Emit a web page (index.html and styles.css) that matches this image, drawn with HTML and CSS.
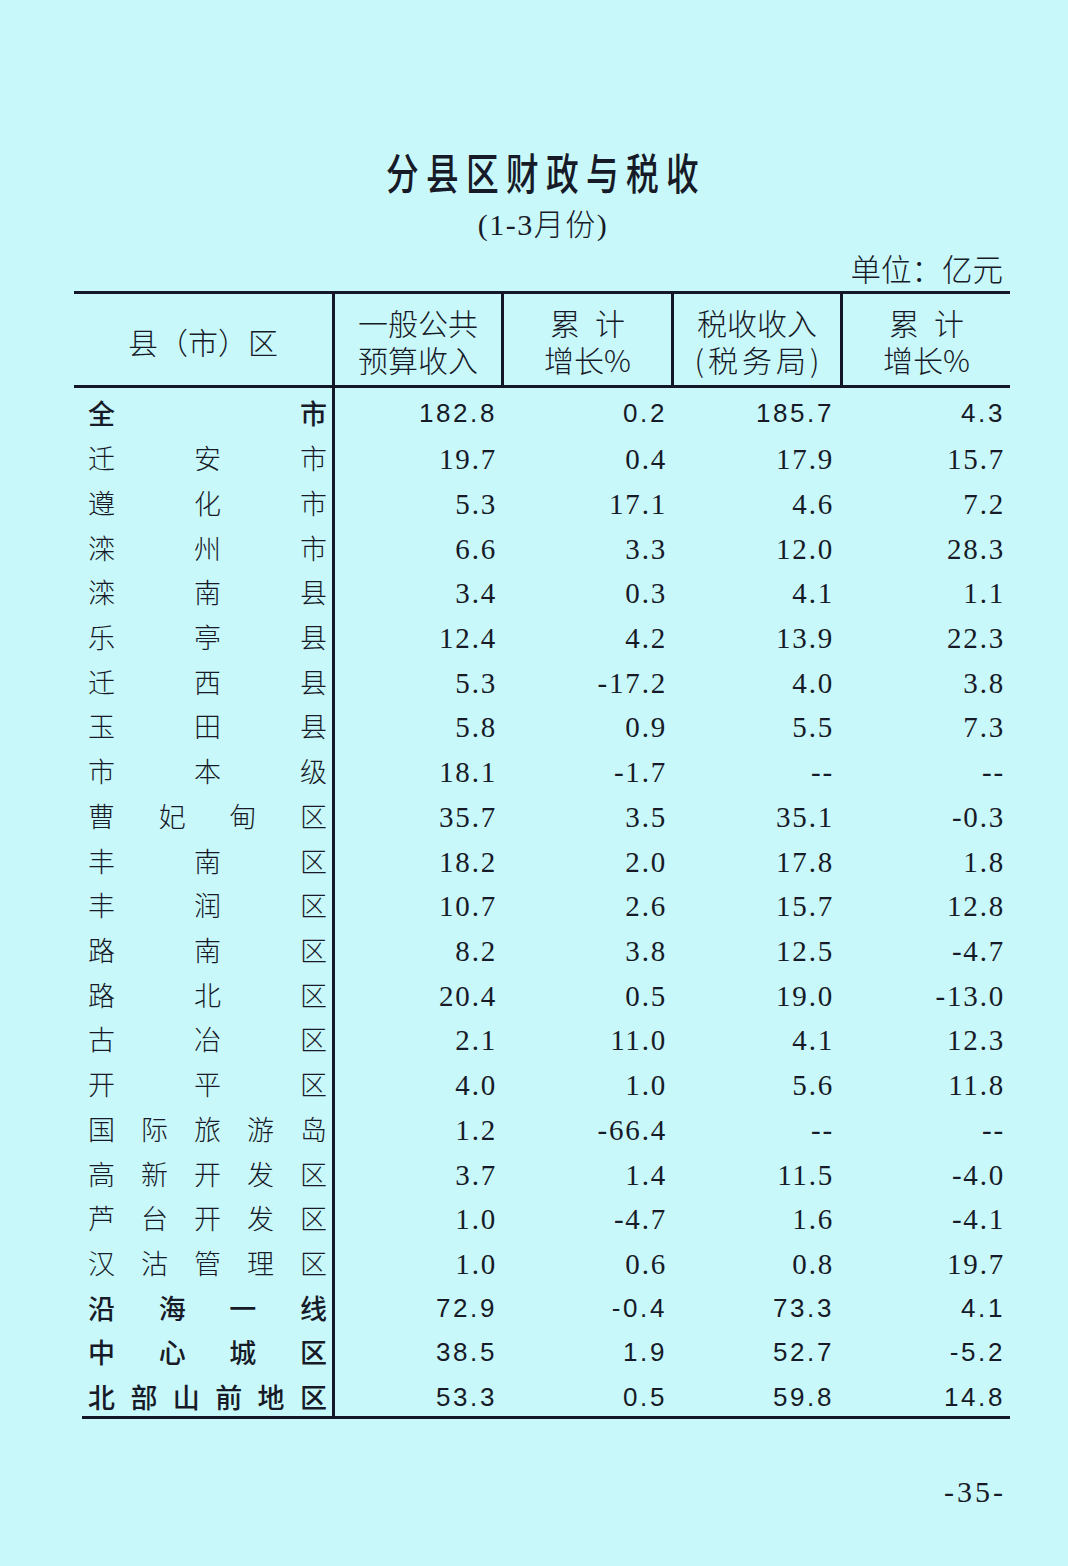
FILE: index.html
```html
<!DOCTYPE html>
<html lang="zh-CN">
<head>
<meta charset="utf-8">
<title>分县区财政与税收</title>
<link rel="stylesheet" href="styles.css">
</head>
<body>
<div class="page">
  <h1 class="title"><span class="title-text">分县区财政与税收</span></h1>
  <div class="subtitle">(1-3月份)</div>
  <div class="sheet">
    <div class="unit">单位：亿元</div>
    <div class="table">
      <div class="head">
        <div class="hc hc-first">县（市）区</div>
        <div class="hc"><span class="hl">一般公共</span><span class="hl">预算收入</span></div>
        <div class="hc"><span class="hl">累&ensp;计</span><span class="hl">增长%</span></div>
        <div class="hc"><span class="hl">税收收入</span><span class="hl narrow">(税务局)</span></div>
        <div class="hc"><span class="hl">累&ensp;计</span><span class="hl">增长%</span></div>
      </div>
      <div class="body">
        <div class="row bold"><div class="name"><span>全</span><span>市</span></div><div class="num n1">182.8</div><div class="num n2">0.2</div><div class="num n3">185.7</div><div class="num n4">4.3</div></div>
        <div class="row"><div class="name"><span>迁</span><span>安</span><span>市</span></div><div class="num n1">19.7</div><div class="num n2">0.4</div><div class="num n3">17.9</div><div class="num n4">15.7</div></div>
        <div class="row"><div class="name"><span>遵</span><span>化</span><span>市</span></div><div class="num n1">5.3</div><div class="num n2">17.1</div><div class="num n3">4.6</div><div class="num n4">7.2</div></div>
        <div class="row"><div class="name"><span>滦</span><span>州</span><span>市</span></div><div class="num n1">6.6</div><div class="num n2">3.3</div><div class="num n3">12.0</div><div class="num n4">28.3</div></div>
        <div class="row"><div class="name"><span>滦</span><span>南</span><span>县</span></div><div class="num n1">3.4</div><div class="num n2">0.3</div><div class="num n3">4.1</div><div class="num n4">1.1</div></div>
        <div class="row"><div class="name"><span>乐</span><span>亭</span><span>县</span></div><div class="num n1">12.4</div><div class="num n2">4.2</div><div class="num n3">13.9</div><div class="num n4">22.3</div></div>
        <div class="row"><div class="name"><span>迁</span><span>西</span><span>县</span></div><div class="num n1">5.3</div><div class="num n2">-17.2</div><div class="num n3">4.0</div><div class="num n4">3.8</div></div>
        <div class="row"><div class="name"><span>玉</span><span>田</span><span>县</span></div><div class="num n1">5.8</div><div class="num n2">0.9</div><div class="num n3">5.5</div><div class="num n4">7.3</div></div>
        <div class="row"><div class="name"><span>市</span><span>本</span><span>级</span></div><div class="num n1">18.1</div><div class="num n2">-1.7</div><div class="num n3">--</div><div class="num n4">--</div></div>
        <div class="row"><div class="name"><span>曹</span><span>妃</span><span>甸</span><span>区</span></div><div class="num n1">35.7</div><div class="num n2">3.5</div><div class="num n3">35.1</div><div class="num n4">-0.3</div></div>
        <div class="row"><div class="name"><span>丰</span><span>南</span><span>区</span></div><div class="num n1">18.2</div><div class="num n2">2.0</div><div class="num n3">17.8</div><div class="num n4">1.8</div></div>
        <div class="row"><div class="name"><span>丰</span><span>润</span><span>区</span></div><div class="num n1">10.7</div><div class="num n2">2.6</div><div class="num n3">15.7</div><div class="num n4">12.8</div></div>
        <div class="row"><div class="name"><span>路</span><span>南</span><span>区</span></div><div class="num n1">8.2</div><div class="num n2">3.8</div><div class="num n3">12.5</div><div class="num n4">-4.7</div></div>
        <div class="row"><div class="name"><span>路</span><span>北</span><span>区</span></div><div class="num n1">20.4</div><div class="num n2">0.5</div><div class="num n3">19.0</div><div class="num n4">-13.0</div></div>
        <div class="row"><div class="name"><span>古</span><span>冶</span><span>区</span></div><div class="num n1">2.1</div><div class="num n2">11.0</div><div class="num n3">4.1</div><div class="num n4">12.3</div></div>
        <div class="row"><div class="name"><span>开</span><span>平</span><span>区</span></div><div class="num n1">4.0</div><div class="num n2">1.0</div><div class="num n3">5.6</div><div class="num n4">11.8</div></div>
        <div class="row"><div class="name"><span>国</span><span>际</span><span>旅</span><span>游</span><span>岛</span></div><div class="num n1">1.2</div><div class="num n2">-66.4</div><div class="num n3">--</div><div class="num n4">--</div></div>
        <div class="row"><div class="name"><span>高</span><span>新</span><span>开</span><span>发</span><span>区</span></div><div class="num n1">3.7</div><div class="num n2">1.4</div><div class="num n3">11.5</div><div class="num n4">-4.0</div></div>
        <div class="row"><div class="name"><span>芦</span><span>台</span><span>开</span><span>发</span><span>区</span></div><div class="num n1">1.0</div><div class="num n2">-4.7</div><div class="num n3">1.6</div><div class="num n4">-4.1</div></div>
        <div class="row"><div class="name"><span>汉</span><span>沽</span><span>管</span><span>理</span><span>区</span></div><div class="num n1">1.0</div><div class="num n2">0.6</div><div class="num n3">0.8</div><div class="num n4">19.7</div></div>
        <div class="row bold"><div class="name"><span>沿</span><span>海</span><span>一</span><span>线</span></div><div class="num n1">72.9</div><div class="num n2">-0.4</div><div class="num n3">73.3</div><div class="num n4">4.1</div></div>
        <div class="row bold"><div class="name"><span>中</span><span>心</span><span>城</span><span>区</span></div><div class="num n1">38.5</div><div class="num n2">1.9</div><div class="num n3">52.7</div><div class="num n4">-5.2</div></div>
        <div class="row bold"><div class="name"><span>北</span><span>部</span><span>山</span><span>前</span><span>地</span><span>区</span></div><div class="num n1">53.3</div><div class="num n2">0.5</div><div class="num n3">59.8</div><div class="num n4">14.8</div></div>
      </div>
      <div class="bottom-rule"></div>
    </div>
  </div>
  <div class="folio">-35-</div>
</div>
</body>
</html>
```

FILE: styles.css
```css
html, body {
  margin: 0;
  padding: 0;
  background: #c9f8fb;
}

.page {
  width: 1068px;
  height: 1566px;
  background: #c9f8fb;
  color: #171b28;
  font-family: "Noto Sans CJK SC", sans-serif;
  box-sizing: border-box;
  padding-top: 150px;
  overflow: hidden;
}

.title {
  margin: 0;
  height: 44px;
  line-height: 44px;
  font-size: 38px;
  font-weight: 500;
  text-align: center;
  padding-left: 24px;
}

.title-text {
  display: inline-block;
  letter-spacing: 8.5px;
  transform: scale(0.86, 1.14);
}

.subtitle {
  margin-top: 14px;
  height: 34px;
  line-height: 34px;
  font-family: "Liberation Serif", "Noto Sans CJK SC", serif;
  font-size: 30px;
  letter-spacing: 1.5px;
  text-align: center;
  padding-left: 18px;
  font-weight: 300;
}

.sheet {
  margin-left: 74px;
  width: 936px;
}

.unit {
  margin-top: 8px;
  height: 36px;
  line-height: 36px;
  font-size: 30.5px;
  font-weight: 300;
  text-align: right;
  padding-right: 7px;
}

.table {
  margin-top: 5px;
}

.head {
  display: grid;
  grid-template-columns: 258px 169px 170px 169px 170px;
  height: 97px;
  box-sizing: border-box;
  border-top: 3px solid #141826;
  border-bottom: 3px solid #141826;
}

.hc {
  display: flex;
  flex-direction: column;
  align-items: center;
  justify-content: center;
  font-size: 30px;
  font-weight: 300;
  line-height: 37px;
  box-sizing: border-box;
  border-left: 3px solid #141826;
  padding-top: 2px;
}

.hl {
  display: block;
  height: 37px;
  line-height: 37px;
  overflow: visible;
  white-space: nowrap;
}

.hc-first {
  border-left: none;
  padding-top: 4px;
}

.hc .narrow {
  letter-spacing: 4px;
  margin-right: -4px;
}

.body {
  height: 1028px;
  box-sizing: border-box;
  padding-top: 3px;
  position: relative;
}

.body::before {
  content: "";
  position: absolute;
  left: 258px;
  top: 0;
  bottom: -3px;
  width: 3px;
  background: #141826;
}

.row {
  display: grid;
  grid-template-columns: 258px 169px 170px 169px 170px;
  height: 44.73px;
  align-items: center;
}

.name {
  display: flex;
  justify-content: space-between;
  padding-left: 14px;
  padding-right: 5px;
  font-size: 27px;
  font-weight: 300;
  line-height: 36px;
}

.num {
  text-align: right;
  font-family: "Liberation Serif", serif;
  font-size: 29px;
  letter-spacing: 1.8px;
  line-height: 36px;
  padding-top: 2px;
}

.n1 { padding-right: 4px; }
.n2 { padding-right: 4px; }
.n3 { padding-right: 6px; }
.n4 { padding-right: 5px; }

.row.bold .name {
  font-weight: 500;
}

.row.bold .num {
  font-family: "Liberation Sans", sans-serif;
  font-size: 26px;
  letter-spacing: 2.6px;
  padding-top: 0;
}

.bottom-rule {
  margin-left: 8px;
  height: 3px;
  background: #141826;
}

.folio {
  margin-top: 57px;
  width: 1006px;
  text-align: right;
  font-family: "Liberation Serif", serif;
  font-size: 30px;
  letter-spacing: 3px;
  line-height: 32px;
}
```
